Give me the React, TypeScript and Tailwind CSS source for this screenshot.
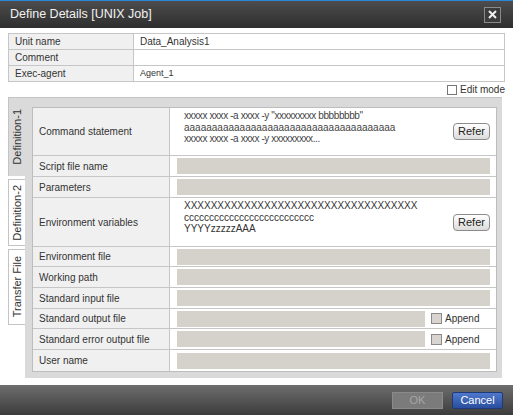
import React from 'react'

const font = { fontFamily: '"Liberation Sans", Arial, sans-serif' }

type Row = {
  label: string
  h: string
  kind: 'field' | 'append' | 'command' | 'env'
}

const rows: Row[] = [
  { label: 'Command statement', h: 'h-[48px]', kind: 'command' },
  { label: 'Script file name', h: 'h-[21px]', kind: 'field' },
  { label: 'Parameters', h: 'h-[21px]', kind: 'field' },
  { label: 'Environment variables', h: 'h-[49px]', kind: 'env' },
  { label: 'Environment file', h: 'h-[20px]', kind: 'field' },
  { label: 'Working path', h: 'h-[21px]', kind: 'field' },
  { label: 'Standard input file', h: 'h-[21px]', kind: 'field' },
  { label: 'Standard output file', h: 'h-[20px]', kind: 'append' },
  { label: 'Standard error output file', h: 'h-[21px]', kind: 'append' },
  { label: 'User name', h: 'h-[21px]', kind: 'field' },
]

function ReferButton() {
  return (
    <button
      type="button"
      className="w-[37px] h-[17px] flex-shrink-0 rounded-[4px] border border-[#8c8c8c] bg-gradient-to-b from-white to-[#dcdcdc] text-[11px] leading-none text-[#222]"
    >
      Refer
    </button>
  )
}

function ValueCell({ kind }: { kind: Row['kind'] }) {
  if (kind === 'field') {
    return (
      <div className="flex-1 flex items-center pl-[7px] pr-[6px]">
        <div className="h-[16px] w-full bg-[#d5d1cb]" />
      </div>
    )
  }
  if (kind === 'append') {
    return (
      <div className="flex-1 flex items-center pl-[7px] pr-[6px]">
        <div className="h-[16px] w-[248px] bg-[#d5d1cb]" />
        <div className="ml-[6px] w-[11px] h-[11px] border border-[#8a8a8a] bg-[#d8d5d0]" />
        <span className="ml-[3px] text-[10px] text-[#333]">Append</span>
      </div>
    )
  }
  if (kind === 'command') {
    return (
      <div className="flex-1 flex items-center pl-[14px] pr-[6px]">
        <div className="flex-1 self-start pt-[2px] text-[10px] leading-[11.5px] text-[#444] whitespace-nowrap">
          <div className="tracking-[-0.4px]">xxxxx xxxx -a xxxx -y "xxxxxxxxx bbbbbbbb"</div>
          <div>aaaaaaaaaaaaaaaaaaaaaaaaaaaaaaaaaaaaaa</div>
          <div className="tracking-[-0.4px]">xxxxx xxxx -a xxxx -y xxxxxxxxx...</div>
        </div>
        <ReferButton />
      </div>
    )
  }
  return (
    <div className="flex-1 flex items-center pl-[14px] pr-[6px]">
      <div className="flex-1 self-start pt-[2px] text-[10px] leading-[11.5px] text-[#333] whitespace-nowrap">
        <div>XXXXXXXXXXXXXXXXXXXXXXXXXXXXXXXXXXX</div>
        <div>cccccccccccccccccccccccccc</div>
        <div>YYYYzzzzzAAA</div>
      </div>
      <ReferButton />
    </div>
  )
}

function SideTab({ label, active, h }: { label: string; active?: boolean; h: string }) {
  return (
    <div
      className={
        active
          ? `${h} w-[17px] flex items-center justify-center bg-[#dadada] border-l border-[#c4c4c4]`
          : `${h} w-[17px] flex items-center justify-center bg-white border-l border-t border-b border-[#c4c4c4]`
      }
    >
      <span className="[writing-mode:vertical-rl] rotate-180 text-[11px] text-[#333] whitespace-nowrap">
        {label}
      </span>
    </div>
  )
}

export default function App() {
  return (
    <div className="w-[513px] h-[415px] bg-white flex flex-col overflow-hidden" style={font}>
      {/* Title bar */}
      <div className="h-[28px] flex-shrink-0 border-t border-[#2a86d8] bg-gradient-to-b from-[#4d4d4d] to-[#2e2e2e] flex items-center justify-between pl-[10px] pr-[12px]">
        <span className="text-[12.5px] text-[#f2f2f2]">Define Details [UNIX Job]</span>
        <button
          type="button"
          aria-label="Close"
          className="w-[17px] h-[16px] border border-[#8a8a8a] bg-[#3c3c3c] flex items-center justify-center"
        >
          <svg width="9" height="9" viewBox="0 0 9 9">
            <path d="M1 1L8 8M8 1L1 8" stroke="#f0f0f0" strokeWidth="2" />
          </svg>
        </button>
      </div>

      <div className="px-[8px] pt-[5px]">
        {/* Unit table */}
        <div className="border border-[#c6c6c6] text-[10px] text-[#333]">
          <div className="flex h-[16px] border-b border-[#c6c6c6]">
            <div className="w-[125px] bg-[#f0f0f0] border-r border-[#c6c6c6] pl-[6px] flex items-center">Unit name</div>
            <div className="flex-1 pl-[6px] flex items-center">Data_Analysis1</div>
          </div>
          <div className="flex h-[16px] border-b border-[#c6c6c6]">
            <div className="w-[125px] bg-[#f0f0f0] border-r border-[#c6c6c6] pl-[6px] flex items-center">Comment</div>
            <div className="flex-1" />
          </div>
          <div className="flex h-[15px]">
            <div className="w-[125px] bg-[#f0f0f0] border-r border-[#c6c6c6] pl-[6px] flex items-center">Exec-agent</div>
            <div className="flex-1 pl-[6px] flex items-center text-[9px]">Agent_1</div>
          </div>
        </div>

        {/* Edit mode */}
        <div className="h-[15px] flex items-center justify-end">
          <div className="w-[10px] h-[10px] border border-[#777] bg-white" />
          <span className="ml-[3px] text-[10px] text-[#333]">Edit mode</span>
        </div>

        {/* Tabbed area */}
        <div className="flex h-[281px] mr-[3px]">
          <div className="flex flex-col border-t border-[#c4c4c4]">
            <SideTab label="Definition-1" active h="h-[78px]" />
            <div className="h-[3px]" />
            <SideTab label="Definition-2" h="h-[67px]" />
            <div className="h-[3px]" />
            <SideTab label="Transfer File" h="h-[76px]" />
          </div>
          <div className="flex-1 bg-[#dadada] border-t border-[#c4c4c4] pl-[7px] pr-[5px] pt-[9px] pb-[6px]">
            <div className="border border-[#bdbdbd] bg-white text-[10px] text-[#333]">
              {rows.map((r, i) => (
                <div
                  key={r.label}
                  className={`flex ${r.h} ${i < rows.length - 1 ? 'border-b border-[#c6c6c6]' : ''}`}
                >
                  <div className="w-[137px] flex-shrink-0 bg-[#f0f0f0] border-r border-[#c6c6c6] pl-[6px] flex items-center">
                    {r.label}
                  </div>
                  <ValueCell kind={r.kind} />
                </div>
              ))}
            </div>
          </div>
        </div>
      </div>

      <div className="h-[7px]" />

      {/* Footer */}
      <div className="flex-1 bg-gradient-to-b from-[#6e6e6e] to-[#3c3c3c] flex items-center justify-end gap-[9px] pr-[10px]">
        <button
          type="button"
          disabled
          className="w-[51px] h-[17px] bg-[#7b7b7b] border border-[#8a8a8a] text-[11px] text-[#a6a6a6] leading-none"
        >
          OK
        </button>
        <button
          type="button"
          className="w-[51px] h-[17px] rounded-[2px] bg-gradient-to-b from-[#4f78cc] to-[#2a4e9e] border border-[#1e3a78] text-[11px] text-white leading-none"
        >
          Cancel
        </button>
      </div>
    </div>
  )
}
